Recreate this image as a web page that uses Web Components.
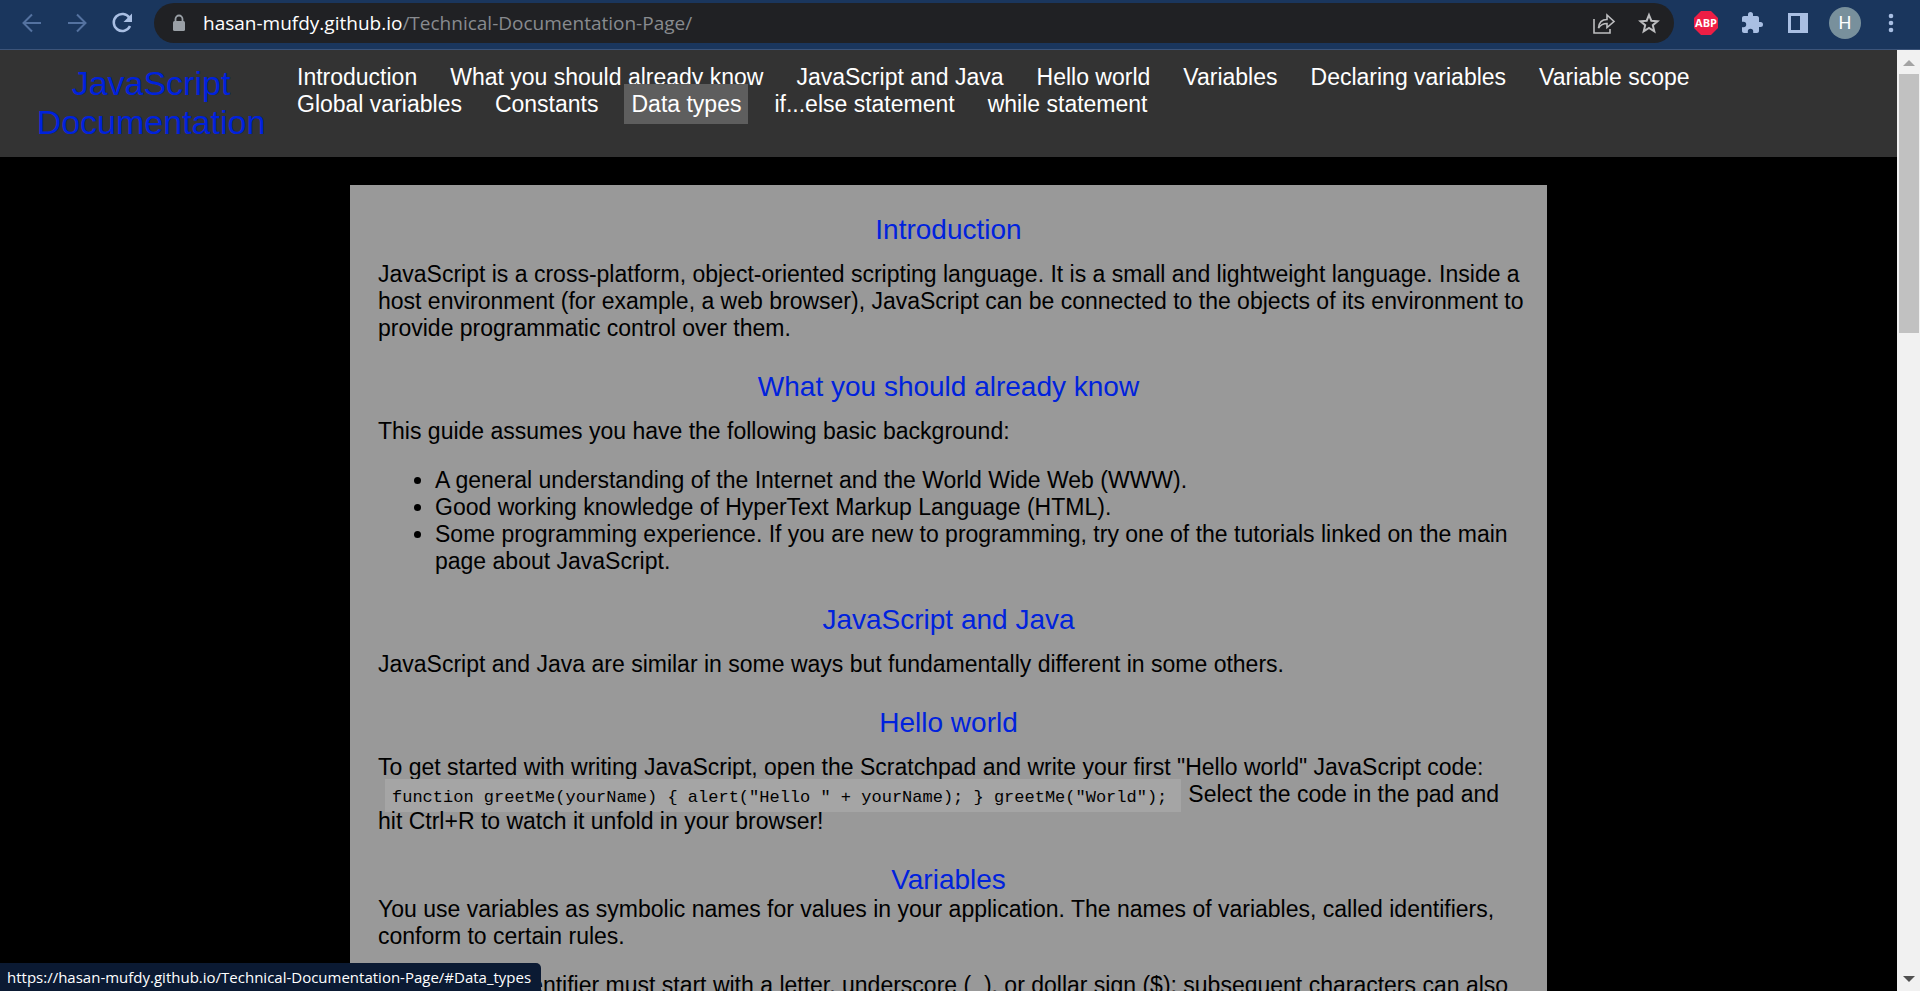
<!DOCTYPE html>
<html lang="en">
<head>
<meta charset="utf-8">
<title>JavaScript Documentation</title>
<style>
html, body { margin: 0; height: 100%; background: #000; overflow: hidden; }
body { font: 23px/27px "Liberation Sans", Arial, sans-serif; color: #000; }
</style>
</head>
<body>
<browser-window>
  <browser-toolbar slot="toolbar" host="hasan-mufdy.github.io" path="/Technical-Documentation-Page/"></browser-toolbar>
  <site-header>
    <span slot="title">JavaScript Documentation</span>
    <nav-link href="#Introduction">Introduction</nav-link>
    <nav-link href="#What_you_should_already_know">What you should already know</nav-link>
    <nav-link href="#JavaScript_and_Java">JavaScript and Java</nav-link>
    <nav-link href="#Hello_world">Hello world</nav-link>
    <nav-link href="#Variables">Variables</nav-link>
    <nav-link href="#Declaring_variables">Declaring variables</nav-link>
    <nav-link href="#Variable_scope">Variable scope</nav-link>
    <nav-link href="#Global_variables">Global variables</nav-link>
    <nav-link href="#Constants">Constants</nav-link>
    <nav-link href="#Data_types" active>Data types</nav-link>
    <nav-link href="#if...else_statement">if...else statement</nav-link>
    <nav-link href="#while_statement">while statement</nav-link>
  </site-header>
  <doc-panel>
    <doc-section id="Introduction" heading="Introduction">
      <doc-text>JavaScript is a cross-platform, object-oriented scripting language. It is a small and lightweight language. Inside a host environment (for example, a web browser), JavaScript can be connected to the objects of its environment to provide programmatic control over them.</doc-text>
    </doc-section>
    <doc-section id="What_you_should_already_know" heading="What you should already know">
      <doc-text>This guide assumes you have the following basic background:</doc-text>
      <doc-list items='["A general understanding of the Internet and the World Wide Web (WWW).","Good working knowledge of HyperText Markup Language (HTML).","Some programming experience. If you are new to programming, try one of the tutorials linked on the main page about JavaScript."]'></doc-list>
    </doc-section>
    <doc-section id="JavaScript_and_Java" heading="JavaScript and Java">
      <doc-text>JavaScript and Java are similar in some ways but fundamentally different in some others.</doc-text>
    </doc-section>
    <doc-section id="Hello_world" heading="Hello world">
      <doc-text>To get started with writing JavaScript, open the Scratchpad and write your first "Hello world" JavaScript code: <doc-code>function greetMe(yourName) { alert("Hello " + yourName); } greetMe("World");</doc-code>Select the code in the pad and hit Ctrl+R to watch it unfold in your browser!</doc-text>
    </doc-section>
    <doc-section id="Variables" heading="Variables" tight>
      <doc-text>You use variables as symbolic names for values in your application. The names of variables, called identifiers, conform to certain rules.</doc-text>
      <doc-text>A JavaScript identifier must start with a letter, underscore (_), or dollar sign ($); subsequent characters can also be digits (0-9).</doc-text>
    </doc-section>
  </doc-panel>
  <status-bubble slot="status">https://hasan-mufdy.github.io/Technical-Documentation-Page/#Data_types</status-bubble>
</browser-window>

<script>
const define = (name, html, setup) => {
  const template = document.createElement('template');
  template.innerHTML = html;
  customElements.define(name, class extends HTMLElement {
    constructor() {
      super();
      this.attachShadow({ mode: 'open' }).append(template.content.cloneNode(true));
    }
    connectedCallback() { if (setup) setup(this, this.shadowRoot); }
  });
};

define('browser-window', `
<style>
:host { display: grid; grid-template-rows: auto minmax(0, 1fr); height: 100vh; position: relative; }
.body { display: grid; grid-template-columns: minmax(0, 1fr) auto; min-height: 0; }
main { overflow: hidden; background: #000; }
</style>
<slot name="toolbar"></slot>
<div class="body"><main><slot></slot></main><page-scrollbar></page-scrollbar></div>
<slot name="status"></slot>`);

define('browser-toolbar', `
<style>
:host { display: flex; align-items: center; box-sizing: border-box; height: 50px; padding: 8px 26px 11px 20px; background: #1a365d; border-bottom: 1px solid #3c5479; font: 19px/24px "Open Sans", "Noto Sans", sans-serif; }
button { display: flex; flex: none; align-items: center; justify-content: center; box-sizing: border-box; width: 24px; height: 24px; margin: 0; padding: 0; border: 0; background: none; color: #a9bfe3; }
svg { display: block; flex: none; }
.nav { display: flex; gap: 21px; }
.nav button[disabled] { color: #5472a0; }
.bar { display: flex; flex: 1; align-items: center; box-sizing: border-box; height: 40px; margin-left: 20px; padding: 0 13px 0 17px; border-radius: 20px; background: #202124; }
.bar button { color: #bdbec0; }
.url { flex: 1; margin-left: 16px; white-space: nowrap; color: #888b8f; }
.url b { font-weight: 400; color: #fff; }
.share { margin-right: 21px; }
.tools { display: flex; align-items: center; gap: 22px; margin-left: 20px; }
.tools .avatar { width: 32px; height: 32px; margin: 0 -3px; border-radius: 50%; background: #78909c; color: #fff; font: 18px/32px Roboto, sans-serif; }
.tools .more { width: 6px; margin-left: 8px; }
</style>
<div class="nav">
  <button disabled aria-label="Back"><svg width="24" height="24" fill="none" stroke="currentColor" stroke-width="2"><path d="M21 12H4M12 3.500L3.500 12L12 20.500"/></svg></button>
  <button disabled aria-label="Forward"><svg width="24" height="24" fill="none" stroke="currentColor" stroke-width="2"><path d="M3 12H20M12 3.500L20.500 12L12 20.500"/></svg></button>
  <button aria-label="Reload"><svg width="24" height="24" fill="none" stroke="currentColor" stroke-width="2.500"><path d="M19.500 7A8.500 8.500 0 1 0 20 15"/><path d="M22 2.500V11H13.500Z" fill="currentColor" stroke="none"/></svg></button>
</div>
<div class="bar">
  <svg width="16" height="20" viewBox="0 0 16 20"><path d="M4.500 9V6a3.500 3.500 0 0 1 7 0V9" fill="none" stroke="#9aa0a6" stroke-width="1.800"/><rect x="2" y="8" width="12" height="10" rx="1.500" fill="#9aa0a6"/></svg>
  <div class="url"><b></b><span></span></div>
  <button class="share" aria-label="Share"><svg width="24" height="24" fill="none" stroke="currentColor" stroke-width="1.600"><path d="M2 8V22H18V18"/><path d="M6.500 17C7 11 10 8.500 15 8.500V4L22 10.500L15 16.500V12.500C11 12.500 8.500 14 6.500 17Z"/></svg></button>
  <button aria-label="Bookmark"><svg width="24" height="24" fill="none" stroke="currentColor" stroke-width="2"><path d="M12 4L14.300 9.700L20.500 10.200L15.800 14.200L17.300 20.300L12 17L6.700 20.300L8.200 14.200L3.500 10.200L9.700 9.700Z"/></svg></button>
</div>
<div class="tools">
  <button aria-label="Adblock Plus"><svg width="24" height="24"><path d="M7 0H17L24 7V17L17 24H7L0 17V7Z" fill="#ed1e45"/><text x="12" y="16" text-anchor="middle" font-family="Open Sans" font-size="11" font-weight="700" fill="#fff">ABP</text></svg></button>
  <button aria-label="Extensions"><svg width="24" height="24" viewBox="0 0 24 24" fill="currentColor"><path d="M20.500 11H19V7c0-1.100-.9-2-2-2h-4V3.500a2.500 2.500 0 0 0-5 0V5H4c-1.100 0-2 .9-2 2v3.800h1.500a2.700 2.700 0 0 1 0 5.400H2V20c0 1.100.9 2 2 2h3.800v-1.500a2.700 2.700 0 0 1 5.400 0V22H17c1.100 0 2-.9 2-2v-4h1.500a2.500 2.500 0 0 0 0-5z"/></svg></button>
  <button aria-label="Side panel"><svg width="24" height="24" fill="currentColor"><path fill-rule="evenodd" d="M2 2H22V22H2ZM5 5V19H14V5Z"/></svg></button>
  <button class="avatar" aria-label="Profile">H</button>
  <button class="more" aria-label="Menu"><svg width="6" height="24" fill="currentColor"><circle cx="3" cy="5" r="2.300"/><circle cx="3" cy="12" r="2.300"/><circle cx="3" cy="19" r="2.300"/></svg></button>
</div>`, (el, root) => {
  root.querySelector('b').textContent = el.getAttribute('host');
  root.querySelector('.url span').textContent = el.getAttribute('path');
});

define('page-scrollbar', `
<style>
:host { display: flex; flex-direction: column; align-items: center; width: 23px; background: #f1f1f1; }
svg { flex: none; }
.track { display: flex; flex-direction: column; flex: 1; width: 20px; min-height: 0; }
.thumb { height: 29%; background: #c1c1c1; }
</style>
<svg width="23" height="24"><path d="M6 16H18L12 10Z" fill="#a3a3a3"/></svg>
<div class="track"><div class="thumb"></div></div>
<svg width="23" height="24"><path d="M6 9H18L12 15Z" fill="#505050"/></svg>`);

define('site-header', `
<style>
:host { display: flex; align-items: flex-start; padding: 14px 28px 15px; background: #333; }
h1 { flex: none; width: 246px; margin: 0; font-size: 34px; line-height: 39px; font-weight: 400; text-align: center; color: #0022dd; }
nav { display: flex; flex: 1; flex-wrap: wrap; gap: 0 19px; margin-left: 16px; padding-right: 28px; }
</style>
<h1><slot name="title"></slot></h1>
<nav><slot></slot></nav>`);

define('nav-link', `
<style>
:host { display: block; white-space: nowrap; }
a { padding: 7px; color: #fff; text-decoration: none; }
:host([active]) a { background: #5e5e5e; }
</style>
<a><slot></slot></a>`, (el, root) => { root.querySelector('a').href = el.getAttribute('href'); });

define('doc-panel', `
<style>
:host { display: flex; flex-direction: column; gap: 28px; box-sizing: border-box; width: 1197px; max-width: 100%; margin: 28px auto; padding: 28px; background: #999; }
</style>
<slot></slot>`);

define('doc-section', `
<style>
:host { display: block; }
h2 { margin: 0 0 15px; font-size: 28px; line-height: 33px; font-weight: 400; text-align: center; color: #0022dd; }
:host([tight]) h2 { margin-bottom: 0; }
.content { display: flex; flex-direction: column; gap: 22px; margin-right: -8px; }
</style>
<h2></h2>
<div class="content"><slot></slot></div>`, (el, root) => { root.querySelector('h2').textContent = el.getAttribute('heading'); });

define('doc-text', `
<style>:host { display: block; } p { margin: 0; }</style>
<p><slot></slot></p>`);

define('doc-code', `
<style>
code { margin: 0 7px; padding: 9px 14px 5px 7px; background: #a5a5a5; font: 17px/20px "Liberation Mono", monospace; }
</style>
<code><slot></slot></code>`);

define('doc-list', `
<style>ul { margin: 0; padding-left: 57px; }</style>
<ul></ul>`, (el, root) => {
  root.querySelector('ul').replaceChildren(...JSON.parse(el.getAttribute('items')).map(text => {
    const li = document.createElement('li');
    li.textContent = text;
    return li;
  }));
});

define('status-bubble', `
<style>
:host { position: absolute; left: 0; bottom: 0; box-sizing: border-box; height: 28px; padding: 0 10px 0 7px; border-radius: 0 5px 0 0; background: #0b1a33; color: #fff; font: 15px/28px "Open Sans", "Noto Sans", sans-serif; white-space: nowrap; }
</style>
<slot></slot>`);
</script>
</body>
</html>
